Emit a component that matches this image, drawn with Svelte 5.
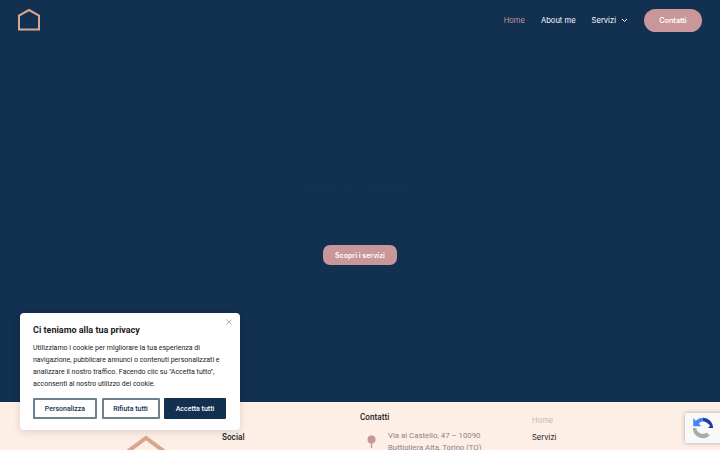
<script>
    const navLinks = ['About me']
    const cookieButtons = [
        { label: 'Personalizza', kind: 'outline', width: 64 },
        { label: 'Rifiuta tutti', kind: 'outline', width: 58 },
        { label: 'Accetta tutti', kind: 'solid', width: 62 }
    ]
</script>

<div class="page">
    <section class="hero">
        <header class="nav">
            <svg class="logo" width="24" height="24" viewBox="0 0 24 24" fill="none">
                <path d="M2 21.500V7.500L12 2 22 7.500V21.500Z" stroke="#d9a58f" stroke-width="2" />
            </svg>
            <nav class="links">
                <a class="active" href="#home">Home</a>
                {#each navLinks as link}
                    <a href="#about">{link}</a>
                {/each}
                <a class="drop" href="#servizi">
                    Servizi
                    <svg width="7" height="5" viewBox="0 0 7 5" fill="none">
                        <path d="M1 1 3.500 3.500 6 1" stroke="#fff" stroke-width="1" />
                    </svg>
                </a>
                <a class="pill" href="#contatti">Contatti</a>
            </nav>
        </header>
        <div class="hero-body">
            <h1>Scopri i servizi</h1>
            <a class="cta" href="#servizi">Scopri i servizi</a>
        </div>
    </section>

    <footer class="foot">
        <div class="col brand">
            <svg width="50" height="40" viewBox="0 0 50 40" fill="none">
                <path d="M8 40V16.500L25 4 42 16.500V40" stroke="#d9a58f" stroke-width="4" />
            </svg>
        </div>
        <div class="col social"><h4>Social</h4></div>
        <div class="col contacts">
            <h4>Contatti</h4>
            <div class="address">
                <svg width="9" height="16" viewBox="0 0 9 16">
                    <circle cx="4.500" cy="4.500" r="4" fill="#c9979a" />
                    <rect x="3.800" y="8" width="1.400" height="5" fill="#c9979a" />
                </svg>
                <p>Via al Castello, 47 – 10090<br />Buttigliera Alta, Torino (TO)</p>
            </div>
        </div>
        <div class="col menu">
            <a class="current" href="#home">Home</a>
            <a href="#servizi">Servizi</a>
        </div>
    </footer>

    <aside class="cookie">
        <button class="close" aria-label="Chiudi">
            <svg width="6" height="6" viewBox="0 0 6 6" fill="none">
                <path d="M.5.5l5 5M5.500.5l-5 5" stroke="#aab1b7" stroke-width="1" />
            </svg>
        </button>
        <h3>Ci teniamo alla tua privacy</h3>
        <p>Utilizziamo i cookie per migliorare la tua esperienza di navigazione, pubblicare annunci o contenuti personalizzati e analizzare il nostro traffico. Facendo clic su "Accetta tutto", acconsenti al nostro utilizzo dei cookie.</p>
        <div class="actions">
            {#each cookieButtons as b}
                <button class={b.kind} style="width: {b.width}px">{b.label}</button>
            {/each}
        </div>
    </aside>

    <div class="recaptcha">
        <svg width="22" height="22" viewBox="0 0 26 26" fill="none">
            <path d="M13 1A12 12 0 0 1 25 13H19L21.500 10 19 8A8 8 0 0 0 13 5Z" fill="#1c3aa9" />
            <path d="M13 1A12 12 0 0 0 4.500 4.500L1.500 1.500V11H11L8 8A8 8 0 0 1 13 5Z" fill="#4285f4" />
            <path d="M1 13A12 12 0 0 0 21 22L17.500 18.500A8 8 0 0 1 5 13H1Z" fill="#ababab" />
        </svg>
    </div>
</div>

<style>
    :global(body) {
        font-family: Roboto, "Liberation Sans", sans-serif;
    }

    .page {
        position: relative;
        width: 720px;
        height: 450px;
        overflow: hidden;
        display: flex;
        flex-direction: column;
    }

    .hero {
        height: 402px;
        flex: none;
        background: #12304f;
        display: flex;
        flex-direction: column;
    }

    .nav {
        height: 40px;
        padding: 0 18px 0 17px;
        display: flex;
        align-items: center;
        justify-content: space-between;
    }

    .links {
        display: flex;
        align-items: center;
        gap: 16px;
    }

    .links a {
        color: #fff;
        font-family: Inter, sans-serif;
        font-size: 7.600px;
        text-decoration: none;
    }

    .links a.active {
        color: #c9979a;
    }

    .drop {
        display: flex;
        align-items: center;
        gap: 5px;
    }

    .links a.pill {
        background: #c9979a;
        border-radius: 12px;
        width: 58px;
        height: 23px;
        display: flex;
        align-items: center;
        justify-content: center;
        font-size: 7.200px;
        font-weight: 600;
    }

    .hero-body {
        flex: 1;
        display: flex;
        flex-direction: column;
        align-items: center;
        padding-top: 139px;
    }

    h1 {
        margin: 0;
        font-size: 14px;
        line-height: 18px;
        font-weight: 400;
        letter-spacing: 1px;
        color: #153352;
    }

    .cta {
        margin-top: 48px;
        width: 74px;
        height: 20px;
        background: #c9979a;
        border-radius: 7px;
        color: #fff;
        font-family: Inter, sans-serif;
        font-size: 7px;
        font-weight: 600;
        display: flex;
        align-items: center;
        justify-content: center;
        text-decoration: none;
    }

    .foot {
        flex: 1;
        background: #fdeee6;
        display: grid;
        grid-template-columns: 222px 138px 172px 1fr;
        color: #222;
    }

    .foot h4 {
        margin: 0;
        font-size: 8.200px;
        font-weight: 500;
        line-height: 11px;
    }

    .brand {
        display: flex;
        justify-content: flex-end;
        padding: 32px 51px 0 0;
    }

    .social {
        padding-top: 30px;
    }

    .contacts {
        padding-top: 10px;
    }

    .address {
        display: flex;
        gap: 12px;
        margin: 7px 0 0 7px;
    }

    .address svg {
        margin-top: 5px;
        flex: none;
    }

    .address p {
        margin: 0;
        font-size: 7.800px;
        line-height: 12px;
        color: #8a8684;
        white-space: nowrap;
    }

    .menu {
        padding-top: 14px;
        display: flex;
        flex-direction: column;
        gap: 7px;
    }

    .menu a {
        font-family: Inter, sans-serif;
        font-size: 7.600px;
        line-height: 10px;
        color: #222;
        text-decoration: none;
    }

    .menu a.current {
        color: #c6b8b4;
    }

    .cookie {
        position: absolute;
        left: 20px;
        top: 313px;
        width: 220px;
        height: 117px;
        box-sizing: border-box;
        padding: 11px 13px;
        background: #fff;
        border-radius: 4px;
        box-shadow: 0 2px 8px rgba(0, 0, 0, .12);
    }

    .cookie h3 {
        margin: 0 0 6px;
        font-size: 9px;
        line-height: 12px;
        font-weight: 700;
        color: #212121;
    }

    .cookie p {
        margin: 0 0 8px;
        font-size: 7px;
        line-height: 12px;
        color: #212121;
    }

    .close {
        position: absolute;
        top: 6px;
        right: 8px;
        padding: 0;
        border: 0;
        background: none;
        display: flex;
    }

    .actions {
        display: flex;
        gap: 4.500px;
    }

    .actions button {
        height: 21px;
        padding: 0;
        font: 500 7px Roboto, sans-serif;
        border-radius: 1px;
    }

    .outline {
        background: #fff;
        color: #12304f;
        border: 2px solid #6f7f8c;
    }

    .solid {
        background: #12304f;
        color: #fff;
        border: 2px solid #12304f;
    }

    .recaptcha {
        position: absolute;
        left: 685px;
        top: 413px;
        width: 40px;
        height: 30px;
        background: #f9f9f9;
        box-shadow: 0 0 4px rgba(0, 0, 0, .3);
        border-radius: 2px;
        display: flex;
        align-items: center;
        padding-left: 7px;
        box-sizing: border-box;
    }
</style>
